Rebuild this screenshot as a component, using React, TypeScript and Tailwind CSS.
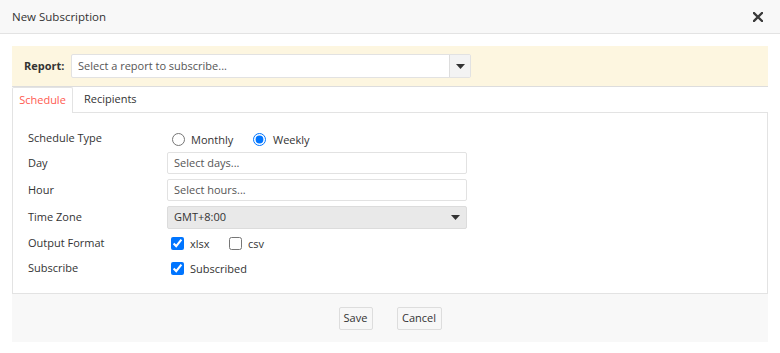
import { useState } from 'react';

const FONT = "font-['Open_Sans','Noto_Sans',sans-serif]";

function Caret({ className = '' }: { className?: string }) {
  return (
    <svg className={className} width="9" height="5" viewBox="0 0 9 5">
      <path d="M0 0h9L4.5 5z" fill="#333" />
    </svg>
  );
}

function Row({ label, className = '', children }: { label: string; className?: string; children: React.ReactNode }) {
  return (
    <div className={`flex items-center ${className}`}>
      <div className="w-[139px] shrink-0 text-[11px] text-[#333]">{label}</div>
      <div className="flex items-center">{children}</div>
    </div>
  );
}

export default function App() {
  const [type, setType] = useState('weekly');
  const [xlsx, setXlsx] = useState(true);
  const [csv, setCsv] = useState(false);
  const [subscribed, setSubscribed] = useState(true);

  return (
    <div className={`w-[780px] h-[353px] bg-white ${FONT} text-[#333]`}>
      {/* header */}
      <div className="h-[34px] flex items-center justify-between px-3 bg-[#f8f8f8] border-b border-[#e3e3e3]">
        <span className="text-[11.5px] text-[#333]">New Subscription</span>
        <button className="mr-[5px]">
          <svg width="10" height="10" viewBox="0 0 10 10">
            <path d="M1 1l8 8M9 1l-8 8" stroke="#3a3a3a" strokeWidth="2.3" strokeLinecap="square" />
          </svg>
        </button>
      </div>

      <div className="px-3 pt-3">
        {/* report bar */}
        <div className="h-[41px] bg-[#fdf6e0] border-b border-[#ddd] flex items-center pl-3">
          <span className="text-[11px] font-bold text-[#333] w-[47px]">Report:</span>
          <div className="flex h-[24px] w-[400px] bg-white border border-[#e2e2e2] rounded-[2px]">
            <div className="flex-1 flex items-center px-[6px] text-[11px] text-[#555]">Select a report to subscribe...</div>
            <div className="w-[21px] bg-[#f3f3f3] border-l border-[#ddd] flex items-center justify-center">
              <Caret />
            </div>
          </div>
        </div>

        {/* tabs */}
        <div className="flex h-[26px] items-end border-b border-[#e3e3e3]">
          <div className="h-[26px] -mb-px w-[61px] bg-white border border-b-0 border-[#e3e3e3] rounded-t-[2px] flex items-center justify-center text-[11px] text-[#ff5a50]">
            Schedule
          </div>
          <div className="h-[25px] px-[11px] flex items-center text-[11px] text-[#333]">Recipients</div>
        </div>

        {/* schedule form */}
        <div className="border border-t-0 border-[#e3e3e3] pl-[15px] pt-[14px] pb-[14px]">
          <Row label="Schedule Type" className="h-[22px]">
            <label className="flex items-center w-[86px] mt-[2px]">
              <input type="radio" name="t" checked={type === 'monthly'} onChange={() => setType('monthly')} className="w-[13px] h-[13px] ml-[5px]" />
              <span className="ml-[6px] text-[11px] mt-[2px]">Monthly</span>
            </label>
            <label className="flex items-center mt-[2px]">
              <input type="radio" name="t" checked={type === 'weekly'} onChange={() => setType('weekly')} className="w-[13px] h-[13px]" />
              <span className="ml-[7px] text-[11px] mt-[2px]">Weekly</span>
            </label>
          </Row>
          <Row label="Day" className="mt-[3px] h-[22px]">
            <div className="w-[300px] h-[22px] border border-[#e2e2e2] rounded-[2px] flex items-center px-[6px] text-[11px] text-[#555]">Select days...</div>
          </Row>
          <Row label="Hour" className="mt-[5px] h-[22px]">
            <div className="w-[300px] h-[22px] border border-[#e2e2e2] rounded-[2px] flex items-center px-[6px] text-[11px] text-[#555]">Select hours...</div>
          </Row>
          <Row label="Time Zone" className="mt-[5px] h-[23px]">
            <div className="w-[300px] h-[23px] bg-[#e9e9e9] border border-[#dcdcdc] rounded-[2px] flex items-center justify-between pl-[6px] pr-[6px] text-[11px] text-[#333]">
              <span>GMT+8:00</span>
              <Caret />
            </div>
          </Row>
          <Row label="Output Format" className="mt-[3px] h-[22px]">
            <label className="flex items-center w-[62px]">
              <input type="checkbox" checked={xlsx} onChange={() => setXlsx(!xlsx)} className="w-[13px] h-[13px] ml-[4px]" />
              <span className="ml-[6px] text-[11px] mt-[3px]">xlsx</span>
            </label>
            <label className="flex items-center">
              <input type="checkbox" checked={csv} onChange={() => setCsv(!csv)} className="w-[13px] h-[13px]" />
              <span className="ml-[6px] text-[11px] mt-[3px]">csv</span>
            </label>
          </Row>
          <Row label="Subscribe" className="mt-[3px] h-[22px]">
            <label className="flex items-center">
              <input type="checkbox" checked={subscribed} onChange={() => setSubscribed(!subscribed)} className="w-[13px] h-[13px] ml-[4px]" />
              <span className="ml-[6px] text-[11px] mt-[3px]">Subscribed</span>
            </label>
          </Row>
        </div>

        {/* footer */}
        <div className="h-[48px] bg-[#f8f8f8] flex items-center justify-center gap-6">
          <button className="h-[23px] w-[34px] border border-[#ddd] bg-[#f7f7f7] rounded-[2px] text-[11px] text-[#333]">Save</button>
          <button className="h-[23px] w-[45px] border border-[#ddd] bg-[#f7f7f7] rounded-[2px] text-[11px] text-[#333]">Cancel</button>
        </div>
      </div>
    </div>
  );
}
